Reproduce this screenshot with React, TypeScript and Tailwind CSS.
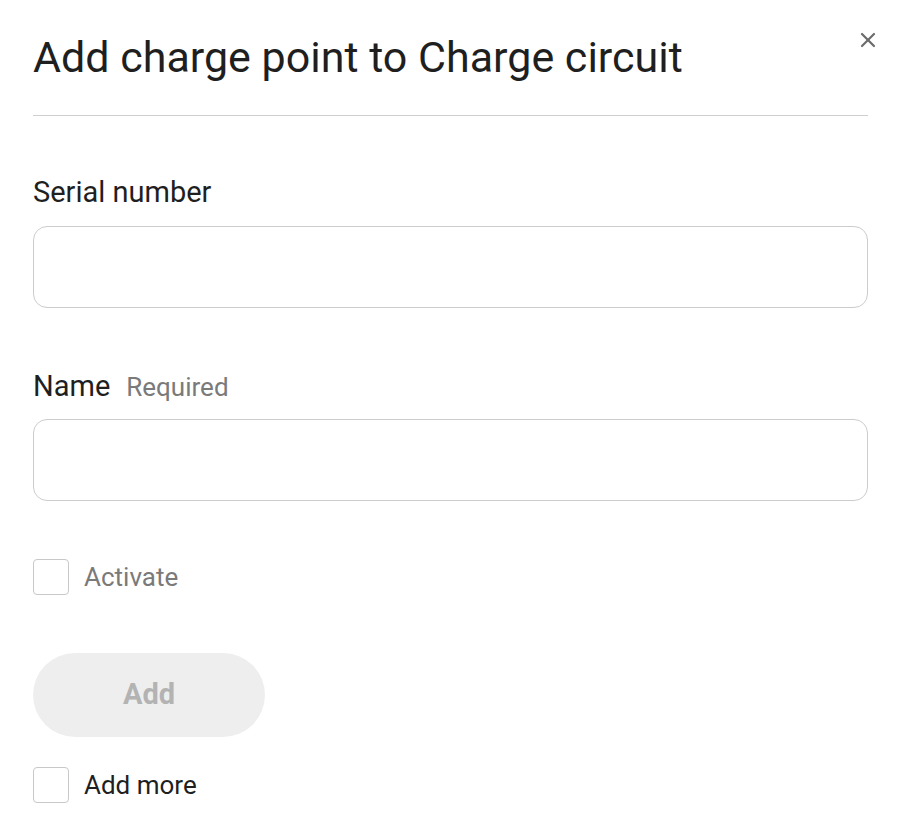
import { X } from 'lucide-react'

export default function App() {
  return (
    <div className="w-[904px] h-[834px] bg-white pl-[33px] pr-[36px]" style={{ fontFamily: 'Roboto, "Liberation Sans", sans-serif' }}>
      <div className="flex items-start justify-between h-[116px] border-b border-[#cfcfcf]">
        <h1 className="mt-[32px] text-[43px] leading-[50px] text-[#1f1f1f] font-normal">Add charge point to Charge circuit</h1>
        <button className="mt-[28px] mr-[-12px] text-[#6b6b6b]"><X className="w-[24px] h-[24px]" strokeWidth={2.2} /></button>
      </div>

      <div className="pt-[59px]">
        <label className="block text-[29px] leading-[34px] text-[#1f1f1f]">Serial number</label>
        <input className="mt-[17px] w-full h-[82px] rounded-[14px] border border-[#cccccc] outline-none px-5 text-[26px]" />
      </div>

      <div className="pt-[61px]">
        <label className="flex items-baseline gap-[16px] leading-[34px] text-[#1f1f1f]">
          <span className="text-[29px]">Name</span>
          <span className="text-[26px] text-[#7a7a7a]">Required</span>
        </label>
        <input className="mt-[15px] w-full h-[82px] rounded-[14px] border border-[#cccccc] outline-none px-5 text-[26px]" />
      </div>

      <label className="mt-[58px] flex items-center gap-[15px] leading-[36px]">
        <span className="w-[36px] h-[36px] rounded-[4px] border border-[#c8c8c8] bg-white" />
        <span className="text-[26px] text-[#7a7a7a]">Activate</span>
      </label>

      <button className="mt-[58px] w-[232px] h-[84px] rounded-full bg-[#eeeeee] text-[29px] font-bold text-[#b3b3b3]">Add</button>

      <label className="mt-[30px] flex items-center gap-[15px] leading-[36px]">
        <span className="w-[36px] h-[36px] rounded-[4px] border border-[#c8c8c8] bg-white" />
        <span className="text-[26px] text-[#1f1f1f]">Add more</span>
      </label>
    </div>
  )
}
